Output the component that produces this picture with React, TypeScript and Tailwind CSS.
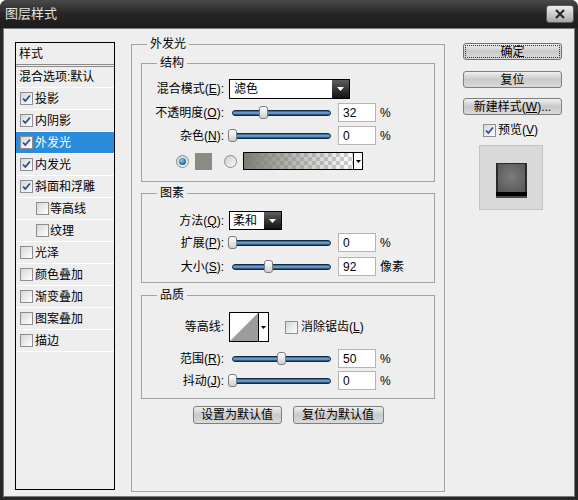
import React from 'react';

// Photoshop "图层样式" dialog — outer glow page

const FONT = "font-['Liberation_Sans','Noto_Sans_CJK_SC',sans-serif]";

const STYLES: { label: string; checked: boolean; sub?: boolean; active?: boolean }[] = [
  { label: '投影', checked: true },
  { label: '内阴影', checked: true },
  { label: '外发光', checked: true, active: true },
  { label: '内发光', checked: true },
  { label: '斜面和浮雕', checked: true },
  { label: '等高线', checked: false, sub: true },
  { label: '纹理', checked: false, sub: true },
  { label: '光泽', checked: false },
  { label: '颜色叠加', checked: false },
  { label: '渐变叠加', checked: false },
  { label: '图案叠加', checked: false },
  { label: '描边', checked: false },
];

function CheckBox({ checked }: { checked: boolean }) {
  return (
    <div className="w-[13px] h-[13px] shrink-0 border border-[#8e8e8e] bg-linear-to-br from-[#d6d6d6] to-white flex items-center justify-center">
      {checked && (
        <svg width="11" height="11" viewBox="0 0 11 11">
          <path d="M2 5.5 L4.3 8 L9 2.5" fill="none" stroke="#2b4a98" strokeWidth="1.8" />
        </svg>
      )}
    </div>
  );
}

function Radio({ on }: { on: boolean }) {
  return (
    <div className="w-[13px] h-[13px] shrink-0 rounded-full border border-[#8a8a8a] bg-linear-to-br from-[#d0d0d0] to-[#f8f8f8] flex items-center justify-center">
      {on && <div className="w-[7px] h-[7px] rounded-full bg-[radial-gradient(circle_at_40%_35%,#8fd0f5,#1f6a9c_65%,#123d5c)]" />}
    </div>
  );
}

function Mn({ k }: { k: string }) {
  return (
    <>
      (<span className="underline">{k}</span>)
    </>
  );
}

function Slider({ value, max }: { value: number; max: number }) {
  const left = Math.round((value / max) * 99 - 4.5);
  return (
    <div className="relative w-[99px] h-[13px] flex items-center shrink-0">
      <div className="w-full h-[6px] rounded-full border border-[#132a45] bg-linear-to-b from-[#2f5b8a] via-[#7ab2e0] to-[#1a3a60]" />
      <div
        className="absolute top-0 w-[9px] h-[13px] rounded-[3px] border border-[#7c7c7c] bg-linear-to-b from-white to-[#cfcfcf]"
        style={{ left }}
      />
    </div>
  );
}

function NumBox({ v }: { v: string }) {
  return (
    <div className="w-[38px] h-[19px] shrink-0 border border-[#b4b4b4] bg-white pl-[4px] flex items-center text-[12px] leading-none">
      {v}
    </div>
  );
}

function SliderRow({ label, k, value, max, unit, mt }: { label: string; k: string; value: number; max: number; unit: string; mt: string }) {
  return (
    <div className={`flex items-center h-[19px] ${mt}`}>
      <div className="w-[82px] text-right whitespace-nowrap">
        {label}
        <Mn k={k} />:
      </div>
      <div className="ml-[8px]">
        <Slider value={value} max={max} />
      </div>
      <div className="ml-[7px]">
        <NumBox v={String(value)} />
      </div>
      <div className="ml-[4px]">{unit}</div>
    </div>
  );
}

function DarkArrow() {
  return (
    <div className="w-[17px] h-full bg-linear-to-b from-[#5e5e5e] to-[#141414] flex items-center justify-center">
      <svg width="7" height="4" viewBox="0 0 7 4">
        <path d="M0 0 H7 L3.5 4 Z" fill="#fff" />
      </svg>
    </div>
  );
}

function SmallArrow() {
  return (
    <svg width="5" height="3" viewBox="0 0 5 3">
      <path d="M0 0 H5 L2.5 3 Z" fill="#000" />
    </svg>
  );
}

function Group({ title, children, className = '' }: { title: string; children: React.ReactNode; className?: string }) {
  return (
    <fieldset className={`border border-[#a2a2a2] ${className}`}>
      <legend className="ml-[15px] px-[3px] h-[14px] leading-[14px]">{title}</legend>
      {children}
    </fieldset>
  );
}

function Btn({ children, focus, className = '' }: { children: React.ReactNode; focus?: boolean; className?: string }) {
  return (
    <div
      className={`rounded-[3px] border ${focus ? 'border-[#3f7f9e]' : 'border-[#7e7e7e]'} bg-linear-to-b from-[#f0f0f0] via-[#c9c9c9] to-[#dadada] p-[1px] ${className}`}
    >
      <div className={`w-full h-full flex items-center justify-center leading-none ${focus ? 'border border-dotted border-[#333]' : ''}`}>
        {children}
      </div>
    </div>
  );
}

export default function App() {
  return (
    <div className={`w-[578px] h-[500px] bg-white text-[12px] text-black ${FONT}`}>
      <div className="w-full h-full rounded-t-[7px] bg-[#262626] flex flex-col px-[3px] pb-[3px]">
        {/* title bar */}
        <div className="h-[28px] shrink-0 flex items-center justify-between pl-[5px] pr-[4px] rounded-t-[7px] bg-linear-to-b from-[#4a4a4a] via-[#262626] to-[#1c1c1c] -mx-[3px] px-[8px]">
          <span className="text-[13px] text-[#e2e2e2]">图层样式</span>
          <div className="w-[28px] h-[18px] rounded-[3px] border border-[#5a5a5a] bg-linear-to-b from-[#f0f0f0] to-[#a8a8a8] flex items-center justify-center">
            <svg width="12" height="10" viewBox="0 0 12 10">
              <path d="M2 1 L10 9 M10 1 L2 9" stroke="#2a2a2a" strokeWidth="2.2" />
            </svg>
          </div>
        </div>

        {/* body */}
        <div className="flex-1 bg-[#eeeeee] border border-[#7a7a7a] flex items-start">
          {/* style list */}
          <div className="ml-[11px] mt-[13px] w-[100px] h-[448px] border border-black flex flex-col">
            <div className="h-[24px] pl-[3px] flex items-center border-b-[3px] border-double border-[#8a8a8a]">样式</div>
            <div className="h-[21px] pl-[3px] flex items-center border-b border-white whitespace-nowrap">混合选项:默认</div>
            {STYLES.map((s) => (
              <div
                key={s.label}
                className={`h-[22px] flex items-center border-b border-white ${s.active ? 'bg-[#2b8cdb] text-white' : ''} ${s.sub ? 'pl-[20px]' : 'pl-[4px]'}`}
              >
                <CheckBox checked={s.checked} />
                <span className={s.sub ? 'ml-[1px]' : 'ml-[2px]'}>{s.label}</span>
              </div>
            ))}
          </div>

          {/* options */}
          <Group title="外发光" className="ml-[16px] mt-[8px] w-[314px] h-[455px]">
            <div className="px-[9px] flex flex-col">
              <Group title="结构" className="mt-[5px]">
                <div className="pt-[9px] pb-[11px] flex flex-col">
                  <div className="flex items-center h-[20px]">
                    <div className="w-[82px] text-right whitespace-nowrap">
                      混合模式<Mn k="E" />:
                    </div>
                    <div className="ml-[5px] w-[121px] h-[20px] border border-black bg-white flex">
                      <div className="flex-1 pl-[4px] flex items-center">滤色</div>
                      <DarkArrow />
                    </div>
                  </div>
                  <SliderRow label="不透明度" k="O" value={32} max={100} unit="%" mt="mt-[4px]" />
                  <SliderRow label="杂色" k="N" value={0} max={100} unit="%" mt="mt-[4px]" />
                  <div className="flex items-center h-[18px] mt-[7px]">
                    <div className="ml-[34px]">
                      <Radio on />
                    </div>
                    <div className="ml-[6px] w-[17px] h-[17px] bg-[#8b8b84]" />
                    <div className="ml-[12px]">
                      <Radio on={false} />
                    </div>
                    <div className="ml-[6px] w-[120px] h-[18px] border border-black flex">
                      <div className="flex-1 bg-[image:linear-gradient(to_right,#7d7d75,rgba(125,125,117,0)),repeating-conic-gradient(#cfcfcf_0_25%,#ffffff_0_50%)] bg-[size:100%_100%,8px_8px]" />
                      <div className="w-[9px] border-l border-black bg-white flex items-center justify-center">
                        <SmallArrow />
                      </div>
                    </div>
                  </div>
                </div>
              </Group>

              <Group title="图素" className="mt-[4px]">
                <div className="pt-[11px] pb-[6px] flex flex-col">
                  <div className="flex items-center h-[19px]">
                    <div className="w-[82px] text-right whitespace-nowrap">
                      方法<Mn k="Q" />:
                    </div>
                    <div className="ml-[5px] w-[53px] h-[19px] border border-black bg-white flex">
                      <div className="flex-1 pl-[3px] flex items-center">柔和</div>
                      <DarkArrow />
                    </div>
                  </div>
                  <SliderRow label="扩展" k="P" value={0} max={100} unit="%" mt="mt-[3px]" />
                  <SliderRow label="大小" k="S" value={92} max={250} unit="像素" mt="mt-[5px]" />
                </div>
              </Group>

              <Group title="品质" className="mt-[5px]">
                <div className="pt-[10px] pb-[8px] flex flex-col">
                  <div className="flex items-center h-[30px]">
                    <div className="w-[82px] text-right">等高线:</div>
                    <div className="ml-[5px] w-[40px] h-[30px] border border-black bg-white flex">
                      <svg width="28" height="28" viewBox="0 0 28 28" className="block">
                        <polygon points="0,28 28,0 28,28" fill="#9c9c9c" />
                      </svg>
                      <div className="flex-1 border-l border-black flex items-center justify-center">
                        <SmallArrow />
                      </div>
                    </div>
                    <div className="ml-[16px]">
                      <CheckBox checked={false} />
                    </div>
                    <span className="ml-[3px]">
                      消除锯齿<Mn k="L" />
                    </span>
                  </div>
                  <SliderRow label="范围" k="R" value={50} max={100} unit="%" mt="mt-[7px]" />
                  <SliderRow label="抖动" k="J" value={0} max={100} unit="%" mt="mt-[3px]" />
                </div>
              </Group>

              <div className="mt-[7px] flex justify-center gap-[11px]">
                <Btn className="w-[89px] h-[18px]">设置为默认值</Btn>
                <Btn className="w-[91px] h-[18px]">复位为默认值</Btn>
              </div>
            </div>
          </Group>

          {/* right column */}
          <div className="ml-[18px] mt-[14px] w-[99px] flex flex-col">
            <Btn focus className="h-[17px]">确定</Btn>
            <Btn className="h-[17px] mt-[11px]">复位</Btn>
            <Btn className="h-[17px] mt-[10px]">
              新建样式<Mn k="W" />...
            </Btn>
            <div className="mt-[8px] h-[14px] flex items-center pl-[20px]">
              <CheckBox checked />
              <span className="ml-[2px]">
                预览<Mn k="V" />
              </span>
            </div>
            <div className="mt-[8px] ml-[16px] w-[64px] h-[65px] bg-[#d9d9d9] border border-[#c4c4c4] pl-[16px] pt-[17px]">
              <div className="w-[31px] h-[35px] flex flex-col">
                <div className="h-[29px] border-x-2 border-t border-[#2a2a2a] bg-[radial-gradient(circle_at_50%_45%,#7c7c7c,#555555)]" />
                <div className="h-[4px] bg-black" />
                <div className="h-[2px] bg-[#4a4a4a]" />
              </div>
            </div>
          </div>
        </div>
      </div>
    </div>
  );
}
